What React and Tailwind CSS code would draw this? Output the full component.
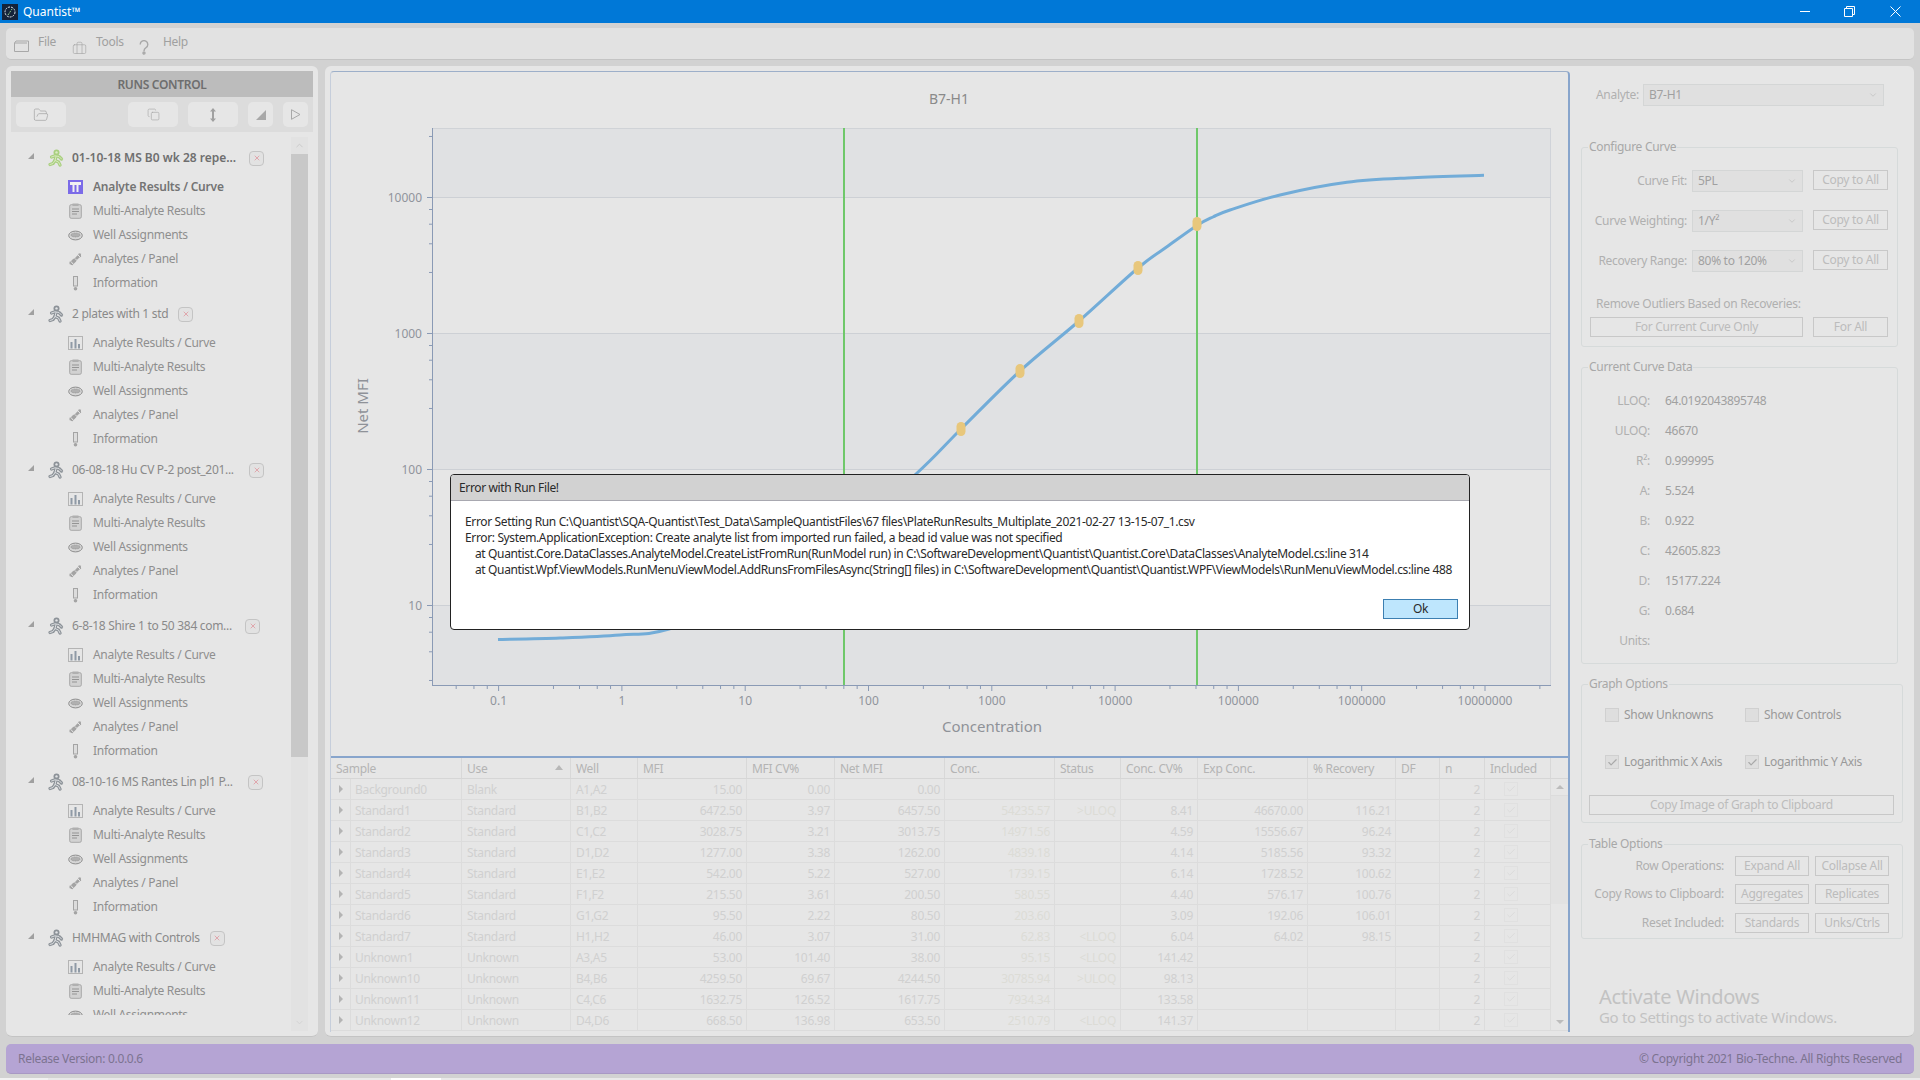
import React from 'react';
import { ChevronDown, ChevronUp, FolderOpen, Copy, Briefcase, Check, X } from 'lucide-react';

const GROUPS = [
  { title: '01-10-18 MS B0 wk 28 repe...', active: true, titleClass: 'w-[167px]' },
  { title: '2 plates with 1 std', titleClass: '' },
  { title: '06-08-18 Hu CV P-2 post_201...', titleClass: 'w-[167px]' },
  { title: '6-8-18 Shire 1 to 50 384 com...', titleClass: 'w-[163px]' },
  { title: '08-10-16 MS Rantes Lin pl1 P...', titleClass: 'w-[166px]' },
  { title: 'HMHMAG with Controls', titleClass: '', clipped: true },
];

const ROWS = [
  ['Background0', 'Blank', 'A1,A2', '15.00', '0.00', '0.00', '', '', '', '', ''],
  ['Standard1', 'Standard', 'B1,B2', '6472.50', '3.97', '6457.50', '54235.57', '>ULOQ', '8.41', '46670.00', '116.21'],
  ['Standard2', 'Standard', 'C1,C2', '3028.75', '3.21', '3013.75', '14971.56', '', '4.59', '15556.67', '96.24'],
  ['Standard3', 'Standard', 'D1,D2', '1277.00', '3.38', '1262.00', '4839.18', '', '4.14', '5185.56', '93.32'],
  ['Standard4', 'Standard', 'E1,E2', '542.00', '5.22', '527.00', '1739.15', '', '6.14', '1728.52', '100.62'],
  ['Standard5', 'Standard', 'F1,F2', '215.50', '3.61', '200.50', '580.55', '', '4.40', '576.17', '100.76'],
  ['Standard6', 'Standard', 'G1,G2', '95.50', '2.22', '80.50', '203.60', '', '3.09', '192.06', '106.01'],
  ['Standard7', 'Standard', 'H1,H2', '46.00', '3.07', '31.00', '62.83', '<LLOQ', '6.04', '64.02', '98.15'],
  ['Unknown1', 'Unknown', 'A3,A5', '53.00', '101.40', '38.00', '95.15', '<LLOQ', '141.42', '', ''],
  ['Unknown10', 'Unknown', 'B4,B6', '4259.50', '69.67', '4244.50', '30785.94', '>ULOQ', '98.13', '', ''],
  ['Unknown11', 'Unknown', 'C4,C6', '1632.75', '126.52', '1617.75', '7934.34', '', '133.58', '', ''],
  ['Unknown12', 'Unknown', 'D4,D6', '668.50', '136.98', '653.50', '2510.79', '<LLOQ', '141.37', '', ''],
];

const COLUMNS = 'grid grid-cols-[131px_109px_67px_109px_88px_110px_110px_66px_77px_110px_88px_44px_45px_66px]';

const HEADERS = ['Sample', 'Use', 'Well', 'MFI', 'MFI CV%', 'Net MFI', 'Conc.', 'Status', 'Conc. CV%', 'Exp Conc.', '% Recovery', 'DF', 'n', 'Included'];

const CURVE = [
  [498, 639.5], [560, 638], [620, 635], [669, 629], [760, 594], [840, 538], [916, 474], [961, 429], [1020, 371],
  [1079, 321], [1138, 268], [1168, 246], [1197, 225.5], [1213, 217], [1230, 210], [1280, 195], [1347, 182.3], [1413, 177.7], [1484, 175.3],
];

const MARKERS = [[961, 429], [1020, 371], [1079, 321], [1138, 268], [1197, 224]];

const curvePath = () => {
  let d = `M${CURVE[0][0]} ${CURVE[0][1]}`;
  for (let i = 0; i < CURVE.length - 1; i++) {
    const p0 = CURVE[Math.max(i - 1, 0)];
    const p1 = CURVE[i];
    const p2 = CURVE[i + 1];
    const p3 = CURVE[Math.min(i + 2, CURVE.length - 1)];
    const c1 = [p1[0] + (p2[0] - p0[0]) / 6, p1[1] + (p2[1] - p0[1]) / 6];
    const c2 = [p2[0] - (p3[0] - p1[0]) / 6, p2[1] - (p3[1] - p1[1]) / 6];
    d += ` C${c1[0]} ${c1[1]} ${c2[0]} ${c2[1]} ${p2[0]} ${p2[1]}`;
  }
  return d;
};

// minor ticks sit at these fractions of a decade on both axes
const MINORS = [0.445, 0.656, 0.8, 0.908];
const AXIS = '#8a9ab5';

const Chart = () => {
  const yMajors = [[10000, 197], [1000, 333], [100, 469], [10, 605]];
  const xMajors = ['0.1', '1', '10', '100', '1000', '10000', '100000', '1000000', '10000000'];
  const xMinors = [];
  for (let i = -1; i < 9; i++) {
    MINORS.forEach((m) => {
      const x = 498.6 + (i + m) * 123.3;
      if (x > 433 && x < 1551) xMinors.push(x);
    });
  }
  const yMinors = [];
  [741, 605, 469, 333, 197].forEach((base) => MINORS.forEach((m) => {
    const y = base - m * 136;
    if (y > 128 && y < 685) yMinors.push(y);
  }));

  return (
    <svg width="1237" height="685" viewBox="331 72 1237 685" className="block tracking-normal">
      <rect x="432" y="128" width="1119" height="69" fill="#e0e1e3" />
      <rect x="432" y="333" width="1119" height="136" fill="#e0e1e3" />
      <rect x="432" y="605" width="1119" height="80" fill="#e0e1e3" />
      <line x1="432" y1="128.5" x2="1551" y2="128.5" stroke="#d0d3d7" />
      <line x1="1550.5" y1="128" x2="1550.5" y2="685" stroke="#d0d3d9" />
      {yMajors.map(([v, y]) => (
        <g key={v}>
          <line x1="427" y1={y + 0.5} x2="432" y2={y + 0.5} stroke={AXIS} />
          <line x1="432" y1={y + 0.5} x2="1551" y2={y + 0.5} stroke="#cdd0d5" />
          <text x="422" y={y + 5} textAnchor="end" fontSize="12" fill="#90949c">{v}</text>
        </g>
      ))}
      {yMinors.map((y) => <line key={y} x1="429" y1={y} x2="432" y2={y} stroke={AXIS} />)}
      <line x1="432.5" y1="128" x2="432.5" y2="685" stroke={AXIS} />
      <line x1="432" y1="685.5" x2="1551" y2="685.5" stroke={AXIS} />
      {xMinors.map((x) => <line key={x} x1={x} y1="686" x2={x} y2="689" stroke={AXIS} />)}
      {xMajors.map((v, i) => (
        <g key={v}>
          <line x1={498.6 + i * 123.3} y1="686" x2={498.6 + i * 123.3} y2="691" stroke={AXIS} />
          <text x={498.6 + i * 123.3} y="705" textAnchor="middle" fontSize="12" fill="#90949c">{v}</text>
        </g>
      ))}
      <line x1="844" y1="128" x2="844" y2="685" stroke="#6fc86a" strokeWidth="2" />
      <line x1="1197" y1="128" x2="1197" y2="685" stroke="#6fc86a" strokeWidth="2" />
      <path d={curvePath()} fill="none" stroke="#72acd8" strokeWidth="3" />
      {MARKERS.map(([x, y]) => <rect key={x} x={x - 4.5} y={y - 7} width="9" height="14" rx="4.5" fill="#e8c77c" />)}
      <text x="949" y="104" textAnchor="middle" fontSize="14" fill="#8a8a8a">B7-H1</text>
      <text x="992" y="732" textAnchor="middle" fontSize="15" fill="#8f9298">Concentration</text>
      <text transform="translate(368 406) rotate(-90)" textAnchor="middle" fontSize="15" fill="#8f9298">Net MFI</text>
    </svg>
  );
};

const RunnerIcon = ({ color, inner }) => {
  const body = (
    <>
      <path d="M3.5 8 L7 6.8 L11 7.5 L13.5 10" />
      <path d="M8 7.5 L7 11.5 L10.5 13 L12 16" />
      <path d="M7 11.5 L5 14.5 L2 15.5" />
    </>
  );
  return (
    <svg width="16" height="18" viewBox="0 0 16 18" fill="none" strokeLinecap="round" strokeLinejoin="round">
      <circle cx="8.5" cy="3.4" r="3" fill={color} />
      <circle cx="8.5" cy="3.4" r="1.2" fill={inner} />
      <g stroke={color} strokeWidth="3.2">{body}</g>
      <g stroke={inner} strokeWidth="0.9">{body}</g>
    </svg>
  );
};

const BarsIcon = ({ active }) => (
  active ? (
    <svg width="15" height="14" viewBox="0 0 15 14">
      <rect width="15" height="14" fill="#7b6be8" />
      <path d="M2 2 H13 V5 H10.5 V12 H8.5 V5 H6.5 V12 H4.5 V5 H2 Z" fill="#f1f1f1" />
    </svg>
  ) : (
    <svg width="15" height="14" viewBox="0 0 15 14" fill="none">
      <rect x="0.5" y="0.5" width="14" height="13" stroke="#b4b4b4" />
      <path d="M3.5 12.5 V6 M7.5 12.5 V3 M11 12.5 V8" stroke="#8f9aa6" strokeWidth="2" />
    </svg>
  )
);

const ClipIcon = () => (
  <svg width="13" height="16" viewBox="0 0 13 16" fill="none">
    <rect x="0.7" y="1.7" width="11.6" height="13.6" rx="1.5" fill="#d2d2d2" stroke="#a8a8a8" />
    <rect x="3.5" y="0.5" width="6" height="2.5" fill="#b0b0b0" />
    <path d="M3 6 H10 M3 8.5 H10 M3 11 H8" stroke="#949494" />
  </svg>
);

const PlateIcon = () => (
  <svg width="15" height="11" viewBox="0 0 15 11" fill="none">
    <ellipse cx="7.5" cy="5.5" rx="6.8" ry="4.4" fill="#d6d6d6" stroke="#8e8e8e" />
    <ellipse cx="7.5" cy="5" rx="4.6" ry="2" fill="#b0b0b0" stroke="#8e8e8e" strokeWidth="0.6" strokeDasharray="1 0.6" />
  </svg>
);

const DnaIcon = () => (
  <svg width="15" height="15" viewBox="0 0 15 15" fill="none">
    <path d="M1.5 11 C5 11 4 8 7 7.5 C10 7 9.5 4 13 3.5" stroke="#a4a4a4" strokeWidth="2.4" />
    <path d="M3.5 13 C4 10 7 10.5 7.5 8 C8 5 11 5.5 12 1.5" stroke="#a4a4a4" strokeWidth="2.4" />
    <path d="M3 9.5 L5 12 M7 6.5 L9 8.5 M10 3 L12 5" stroke="#e4e4e4" />
  </svg>
);

const InfoIcon = () => (
  <svg width="7" height="15" viewBox="0 0 7 15" fill="none">
    <rect x="1.5" y="0.5" width="4" height="9.5" fill="#dcdcdc" stroke="#a4a4a4" />
    <circle cx="3.5" cy="12.8" r="1.8" fill="#a4a4a4" />
  </svg>
);

const NavItem = ({ label, bold, children }) => (
  <div className="flex h-6 items-center">
    <div className="flex w-[16px] justify-center">{children}</div>
    <span className={bold ? 'ml-[10px] font-semibold tracking-[-0.2px] text-[#747474]' : 'ml-[10px] text-[#8f8f8f]'}>{label}</span>
  </div>
);

const RunGroup = ({ title, active, titleClass, clipped }) => (
  <div className="h-[156px] pl-[17px]">
    <div className="flex h-7 items-center">
      <div className="mb-[4px] h-0 w-0 border-b-[6px] border-l-[6px] border-b-[#a0a0a0] border-l-transparent" />
      <div className="ml-[14px] flex w-4 justify-center">
        {active ? <RunnerIcon color="#a9cf7f" inner="#dcecc4" /> : <RunnerIcon color="#8c9298" inner="#e2e4e6" />}
      </div>
      <span className={active ? `ml-[8px] whitespace-nowrap font-semibold tracking-normal text-[#6f6f6f] ${titleClass}` : `ml-[8px] whitespace-nowrap text-[#8a8a8a] ${titleClass}`}>{title}</span>
      <div className="ml-[10px] flex h-[15px] w-[15px] items-center justify-center rounded-[4px] border border-[#c4c4c4] bg-[#e2e2e2]">
        <X size={8} strokeWidth={2} className="text-[#e08a92]" />
      </div>
    </div>
    <div className="ml-[39px] mt-[3px]">
      <NavItem label="Analyte Results / Curve" bold={active}><BarsIcon active={active} /></NavItem>
      <NavItem label="Multi-Analyte Results"><ClipIcon /></NavItem>
      <NavItem label="Well Assignments"><PlateIcon /></NavItem>
      {!clipped && <NavItem label="Analytes / Panel"><DnaIcon /></NavItem>}
      {!clipped && <NavItem label="Information"><InfoIcon /></NavItem>}
    </div>
  </div>
);

const ToolBtn = ({ className, children }) => (
  <div className={`flex h-[25px] items-center justify-center rounded-[5px] bg-[#e6e6e6] text-[#a8a8a8] ${className}`}>{children}</div>
);

const RunsControl = () => (
  <aside className="flex h-[971px] w-[312px] shrink-0 flex-col rounded-[6px] border-b border-[#c4c4c4] bg-[#e6e6e6] p-[5px]">
    <div className="flex h-[26px] items-center justify-center bg-[#bcbcbc] pt-[1px] text-[12px] font-semibold text-[#6e6e6e]">RUNS CONTROL</div>
    <div className="flex h-[35px] items-center bg-[#dcdcdc] pl-[5px]">
      <ToolBtn className="w-[50px]"><FolderOpen size={16} strokeWidth={1.2} /></ToolBtn>
      <ToolBtn className="ml-[62px] w-[50px]"><Copy size={13} strokeWidth={1.2} /></ToolBtn>
      <ToolBtn className="ml-[10px] w-[50px]">
        <svg width="6" height="14" viewBox="0 0 6 14" fill="#a0a0a0"><path d="M3 0 L6 3.5 H4 V10.5 H6 L3 14 L0 10.5 H2 V3.5 H0 Z" /></svg>
      </ToolBtn>
      <ToolBtn className="ml-[10px] w-[25px]">
        <div className="h-0 w-0 border-b-[10px] border-l-[10px] border-b-[#a8a8a8] border-l-transparent" />
      </ToolBtn>
      <ToolBtn className="ml-[10px] w-[25px]">
        <svg width="10" height="11" viewBox="0 0 10 11" fill="none" stroke="#a8a8a8"><path d="M0.5 0.7 L9 5.5 L0.5 10.3 Z" /></svg>
      </ToolBtn>
    </div>
    <div className="mt-[5px] flex min-h-0 flex-1">
      <div className="flex-1 overflow-hidden pb-[12px]">
        <div className="h-[878px] overflow-hidden pt-[7px] text-[12px]">
          {GROUPS.map((g) => <RunGroup key={g.title} {...g} />)}
        </div>
      </div>
      <div className="mr-[5px] flex w-[17px] flex-col bg-[#e2e2e2]">
        <div className="flex h-[17px] items-center justify-center"><ChevronUp size={11} className="text-[#c8c8c8]" /></div>
        <div className="h-[603px] bg-[#c8c8c8]" />
        <div className="flex-1" />
        <div className="flex h-[17px] items-center justify-center"><ChevronDown size={11} className="text-[#d2d2d2]" /></div>
      </div>
    </div>
  </aside>
);

const ResultsTable = () => (
  <div className="relative flex-1 text-[12px] leading-none">
    <div className={`${COLUMNS} h-[21px] border-b border-[#d6d6d6] text-[#b4b4b4]`}>
      {HEADERS.map((h) => (
        <div key={h} className="relative flex items-center border-r border-[#d8d8d8] pl-[5px] pt-[2px]">
          {h}
          {h === 'Use' && <div className="absolute right-[7px] top-[7px] h-0 w-0 border-x-[4px] border-b-[5px] border-x-transparent border-b-[#b8b8b8]" />}
        </div>
      ))}
    </div>
    {ROWS.map((row) => (
      <div key={row[0]} className={`${COLUMNS} h-[21px] border-b border-[#dcdcdc] text-[#d0d0d0]`}>
        <div className="flex items-center border-r border-[#dcdcdc]">
          <div className="flex h-full w-[20px] items-center justify-center border-r border-[#dcdcdc]">
            <div className="h-0 w-0 border-y-[4px] border-l-[4px] border-y-transparent border-l-[#b4b4b4]" />
          </div>
          <span className="pl-[4px] pt-[2px]">{row[0]}</span>
        </div>
        <div className="flex items-center border-r border-[#dcdcdc] pl-[5px] pt-[2px]">{row[1]}</div>
        <div className="flex items-center border-r border-[#dcdcdc] pl-[5px] pt-[2px]">{row[2]}</div>
        {row.slice(3, 11).map((cell, i) => (
          <div key={i} className={`flex items-center justify-end border-r border-[#dcdcdc] pr-[4px] pt-[2px] ${i === 3 || i === 4 ? 'text-[#dcdcd6]' : ''}`}>{cell}</div>
        ))}
        <div className="border-r border-[#dcdcdc]" />
        <div className="flex items-center justify-end border-r border-[#dcdcdc] pr-[4px] pt-[2px]">2</div>
        <div className="flex items-center justify-center border-r border-[#dcdcdc] pr-[14px]">
          <div className="flex h-[14px] w-[14px] items-center justify-center border border-[#e0e0e0]"><Check size={10} className="text-[#d8d8d8]" /></div>
        </div>
      </div>
    ))}
    <div className="absolute bottom-[2px] right-0 top-[21px] flex w-[17px] flex-col bg-[#e6e6e6]">
      <div className="flex h-[17px] items-center justify-center border-b border-[#dcdcdc]">
        <div className="h-0 w-0 border-x-[4px] border-b-[4px] border-x-transparent border-b-[#bcbcbc]" />
      </div>
      <div className="h-[108px] bg-[#e2e2e2]" />
      <div className="flex-1" />
      <div className="flex h-[17px] items-center justify-center">
        <div className="h-0 w-0 border-x-[4px] border-t-[4px] border-x-transparent border-t-[#bcbcbc]" />
      </div>
    </div>
  </div>
);

const Combo = ({ className, children }) => (
  <div className={`flex h-[22px] items-center justify-between border border-[#d4d6d6] bg-[#e0e0e0] pl-[5px] pr-[5px] text-[#a0a0a0] ${className}`}>
    <span>{children}</span>
    <ChevronDown size={10} className="text-[#c4c4c4]" />
  </div>
);

const Btn = ({ className, children }) => (
  <div className={`flex h-[20px] items-center justify-center border border-[#c8c8c8] text-[#bcbcbc] ${className}`}>{children}</div>
);

const Group = ({ title, className, children }) => (
  <fieldset className={`rounded-[3px] border border-[#d6dada] ${className}`}>
    <legend className="ml-[6px] h-4 px-px text-[12px] leading-4 text-[#a8a8a8]">{title}</legend>
    {children}
  </fieldset>
);

const CurveRow = ({ label, value, className }) => (
  <div className={`flex h-[22px] items-center ${className}`}>
    <span className="w-[105px] text-right text-[#b0b0b0]">{label}</span>
    <Combo className="ml-[5px] w-[111px]">{value}</Combo>
    <Btn className="mb-[2px] ml-[10px] w-[75px]">Copy to All</Btn>
  </div>
);

const CURVE_DATA = [
  ['LLOQ:', '64.0192043895748'], ['ULOQ:', '46670'], ['R²:', '0.999995'], ['A:', '5.524'], ['B:', '0.922'],
  ['C:', '42605.823'], ['D:', '15177.224'], ['G:', '0.684'], ['Units:', ''],
];

const CheckBox = ({ label, checked }) => (
  <div className="flex h-[14px] w-[140px] items-center">
    <div className="flex h-[14px] w-[14px] items-center justify-center border border-[#d0d0d0] bg-[#dedede]">
      {checked && <Check size={11} strokeWidth={2.5} className="text-[#a8a8a8]" />}
    </div>
    <span className="ml-[5px] text-[#999999]">{label}</span>
  </div>
);

const TableOptionRow = ({ label, a, b, className }) => (
  <div className={`flex h-[20px] items-center ${className}`}>
    <span className="w-[142px] text-right text-[#b0b0b0]">{label}</span>
    <Btn className="ml-[11px] w-[74px]">{a}</Btn>
    <Btn className="ml-[6px] w-[74px]">{b}</Btn>
  </div>
);

const SidePanel = () => (
  <div className="w-[344px] shrink-0 pl-[11px] text-[12px]">
    <div className="mt-[13px] flex h-[22px] items-center">
      <span className="ml-[15px] w-[42px] text-[#b0b0b0]">Analyte:</span>
      <Combo className="ml-[5px] w-[241px]">B7-H1</Combo>
    </div>

    <Group title="Configure Curve" className="mt-[33px] h-[208px] w-[317px]">
      <CurveRow label="Curve Fit:" value="5PL" className="mt-[15px]" />
      <CurveRow label="Curve Weighting:" value="1/Y²" className="mt-[18px]" />
      <CurveRow label="Recovery Range:" value="80% to 120%" className="mt-[18px]" />
      <div className="ml-[14px] mt-[24px] h-4 leading-4 text-[#b0b0b0]">Remove Outliers Based on Recoveries:</div>
      <div className="ml-[8px] mt-[5px] flex">
        <Btn className="w-[213px]">For Current Curve Only</Btn>
        <Btn className="ml-[10px] w-[75px]">For All</Btn>
      </div>
    </Group>

    <Group title="Current Curve Data" className="mt-[12px] h-[305px] w-[317px]">
      <div className="mt-[11px]">
        {CURVE_DATA.map(([k, v]) => (
          <div key={k} className="flex h-[30px] items-center">
            <span className="w-[68px] text-right text-[#b0b0b0]">{k}</span>
            <span className="ml-[15px] text-[#a0a0a0]">{v}</span>
          </div>
        ))}
      </div>
    </Group>

    <Group title="Graph Options" className="mt-[12px] h-[147px] w-[322px]">
      <div className="ml-[23px] mt-[16px] flex">
        <CheckBox label="Show Unknowns" />
        <CheckBox label="Show Controls" />
      </div>
      <div className="ml-[23px] mt-[33px] flex">
        <CheckBox label="Logarithmic X Axis" checked />
        <CheckBox label="Logarithmic Y Axis" checked />
      </div>
      <Btn className="ml-[7px] mt-[26px] w-[305px]">Copy Image of Graph to Clipboard</Btn>
    </Group>

    <Group title="Table Options" className="mt-[13px] h-[103px] w-[322px]">
      <TableOptionRow label="Row Operations:" a="Expand All" b="Collapse All" className="mt-[4px]" />
      <TableOptionRow label="Copy Rows to Clipboard:" a="Aggregates" b="Replicates" className="mt-[8px]" />
      <TableOptionRow label="Reset Included:" a="Standards" b="Unks/Ctrls" className="mt-[9px]" />
    </Group>

    <div className="ml-[18px] mt-[46px] text-[20px] leading-6 text-[#c2c2c2]">Activate Windows</div>
    <div className="ml-[18px] text-[15px] leading-4 text-[#c2c2c2]">Go to Settings to activate Windows.</div>
  </div>
);

const ErrorDialog = () => (
  <div className="absolute left-[450px] top-[474px] h-[156px] w-[1020px] overflow-hidden rounded-[4px] border border-[#222222] bg-white text-[12px] tracking-[-0.36px] text-[#2a2a2a]">
    <div className="flex h-[26px] items-center border-b border-[#a8a8b0] bg-[#d2d2d2] pl-[8px] pt-[1px]">Error with Run File!</div>
    <div className="pl-[14px] pt-[13px] leading-[16px]">
      <div>Error Setting Run C:\Quantist\SQA-Quantist\Test_Data\SampleQuantistFiles\67 files\PlateRunResults_Multiplate_2021-02-27 13-15-07_1.csv</div>
      <div>Error: System.ApplicationException: Create analyte list from imported run failed, a bead id value was not specified</div>
      <div className="pl-[10px]">at Quantist.Core.DataClasses.AnalyteModel.CreateListFromRun(RunModel run) in C:\SoftwareDevelopment\Quantist\Quantist.Core\DataClasses\AnalyteModel.cs:line 314</div>
      <div className="pl-[10px]">at Quantist.Wpf.ViewModels.RunMenuViewModel.AddRunsFromFilesAsync(String[] files) in C:\SoftwareDevelopment\Quantist\Quantist.WPF\ViewModels\RunMenuViewModel.cs:line 488</div>
    </div>
    <div className="absolute bottom-[10px] right-[11px] flex h-[20px] w-[75px] items-center justify-center border border-[#3c7fb1] bg-[#bee6fd]">Ok</div>
  </div>
);

const App = () => (
  <div className="relative flex h-[1080px] w-[1920px] flex-col overflow-hidden bg-[#d2d2d2] font-['Noto_Sans',sans-serif] text-[12px] tracking-[-0.3px]">
    {/* title bar */}
    <div className="flex h-[23px] shrink-0 items-center bg-[#0078d7] text-white">
      <div className="ml-[2px] flex h-[16px] w-[16px] items-center justify-center bg-[#14233a]">
        <svg width="12" height="12" viewBox="0 0 12 12" fill="none" stroke="#dfe8ee" strokeDasharray="2 1"><circle cx="6" cy="6" r="5" /><path d="M4 9 L8 3" stroke="#8fd08f" /></svg>
      </div>
      <span className="ml-[5px] text-[12px] tracking-normal">Quantist™</span>
      <svg className="ml-auto" width="11" height="2" viewBox="0 0 11 2"><rect width="10" height="1" fill="white" /></svg>
      <svg className="ml-[33px]" width="11" height="11" viewBox="0 0 11 11" fill="none" stroke="white"><path d="M0.5 2.5 H8.5 V10.5 H0.5 Z M2.5 2.5 V0.5 H10.5 V8.5 H8.5" /></svg>
      <svg className="ml-[35px] mr-[19px]" width="11" height="11" viewBox="0 0 11 11" fill="none" stroke="white"><path d="M0.5 0.5 L10.5 10.5 M10.5 0.5 L0.5 10.5" /></svg>
    </div>

    {/* menu */}
    <div className="mx-[6px] mt-[5px] flex h-[32px] shrink-0 rounded-[5px] border-b border-[#c4c4c4] bg-[#e2e2e2] text-[12px] text-[#a0a0a0]">
      <div className="ml-[8px] flex items-start pt-[5px]">
        <svg className="mt-[7px]" width="15" height="12" viewBox="0 0 15 12" fill="none" stroke="#a8a8a8"><path d="M0.5 3 H13 M0.5 3 V11.5 H14.5 V1 H2 L0.5 3" /></svg>
        <span className="ml-[9px] w-[18px]">File</span>
        <Briefcase className="ml-[16px] mt-[8px] text-[#a8a8a8]" size={15} strokeWidth={1.1} />
        <span className="ml-[9px] w-[27px]">Tools</span>
        <svg className="ml-[16px] mt-[7px]" width="10" height="15" viewBox="0 0 10 15" fill="none" stroke="#a8a8a8" strokeWidth="1.4">
          <path d="M1.2 4.5 A3.8 3.8 0 1 1 7 7.7 C5.6 8.5 5 9.3 5 11" />
          <circle cx="5" cy="13" r="1" />
        </svg>
        <span className="ml-[14px]">Help</span>
      </div>
    </div>

    {/* body */}
    <div className="mx-[6px] mt-[6px] flex gap-[7px]">
      <RunsControl />
      <div className="flex h-[971px] flex-1 rounded-[6px] border-b border-[#c4c4c4] bg-[#e6e6e6] pl-[5px] pt-[5px]">
        <div className="flex h-[961px] w-[1240px] shrink-0 flex-col rounded-t-[4px] border-l border-r-2 border-t border-l-[#c6cedb] border-r-[#88a5cc] border-t-[#9dafc9]">
          <div className="h-[686px] border-b-2 border-[#88a5cc]"><Chart /></div>
          <ResultsTable />
        </div>
        <SidePanel />
      </div>
    </div>

    {/* status */}
    <div className="mx-[6px] mt-[7px] flex h-[30px] shrink-0 items-center justify-between rounded-[5px] border-b border-[#a898c4] bg-[#b5a4d4] px-[12px] text-[12px] text-[#7c7390]">
      <span>Release Version: 0.0.0.6</span>
      <span>© Copyright 2021 Bio-Techne. All Rights Reserved</span>
    </div>

    {/* sliver of the desktop below the window */}
    <div className="mt-[4px] flex h-[2px] shrink-0 bg-[#e9e9e9]">
      <div className="w-[48px] bg-[#f2f2f2]" />
      <div className="ml-[343px] w-[50px] bg-white" />
    </div>

    <ErrorDialog />
  </div>
);

export default App;
